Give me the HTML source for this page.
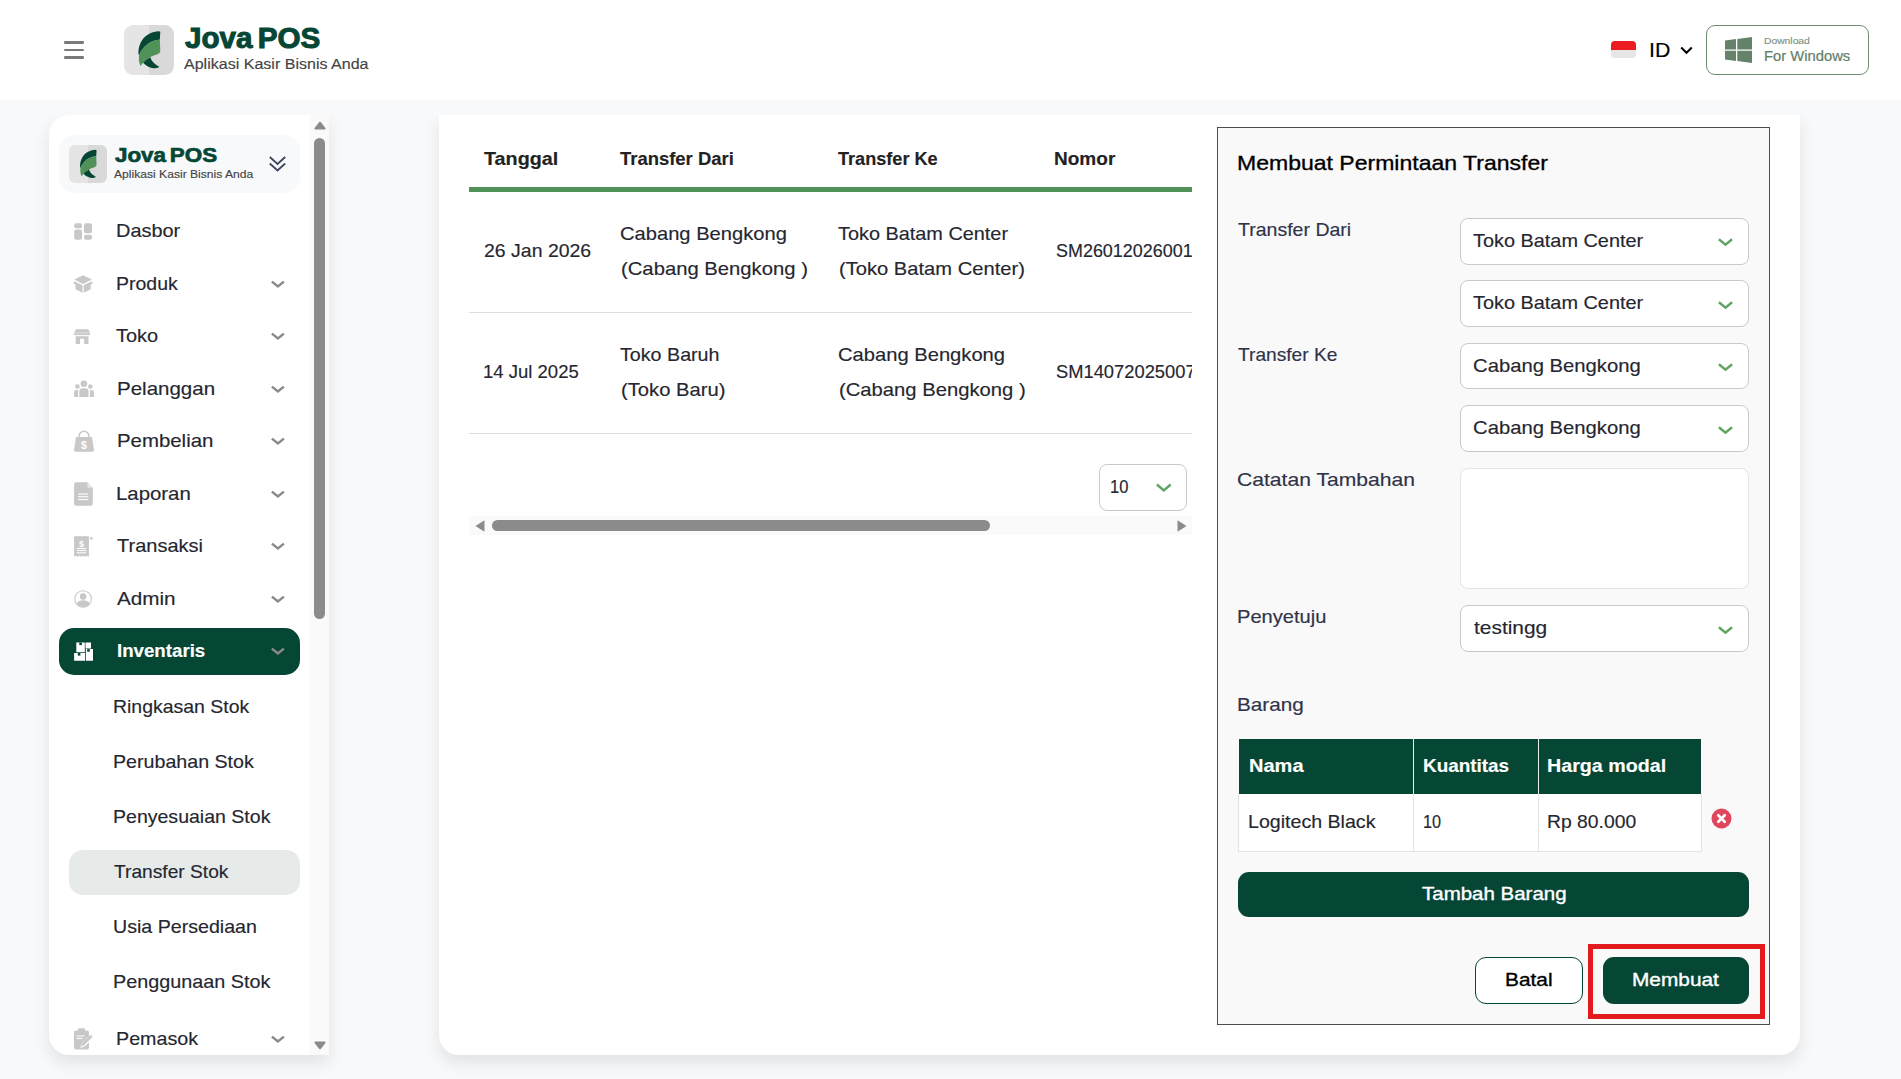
<!DOCTYPE html>
<html lang="id">
<head>
<meta charset="utf-8">
<title>Jova POS - Transfer Stok</title>
<style>
*{box-sizing:border-box;margin:0;padding:0}
html,body{width:1901px;height:1079px;overflow:hidden}
body{position:relative;background:#f8f9fb;font-family:"Liberation Sans",sans-serif;color:#25262f;font-size:18px}
.a{position:absolute}
.t{position:absolute;white-space:nowrap;line-height:1;transform-origin:0 0;-webkit-text-stroke-width:.15px}
svg{position:absolute;overflow:visible}
#hdr{left:0;top:0;width:1901px;height:100px;background:#fff}
.hb{left:64px;width:20px;height:2.4px;background:#7a7a7a;border-radius:1.2px}
.logo{border-radius:9px;overflow:hidden;background:linear-gradient(90deg,#e5e5e5 0,#e5e5e5 50%,#d9d9d9 50%,#d9d9d9 100%)}
#sb{left:49px;top:115px;width:280px;height:940px;background:#fff;border-radius:20px 0 0 20px;box-shadow:0 8px 16px rgba(40,42,50,.11);clip-path:inset(0 -40px -40px -40px)}
#sbtrack{left:310px;top:115px;width:19px;height:940px;background:#fafafa}
#sbthumb{left:314px;top:138px;width:11px;height:481px;background:#8b8b8b;border-radius:6px}
#card{left:439px;top:115px;width:1361px;height:940px;background:#fff;border-radius:0 0 20px 20px;box-shadow:0 8px 16px rgba(40,42,50,.11);clip-path:inset(0 -40px -40px -40px)}
.sel{background:#fff;border:1px solid #c9c9c9;border-radius:8px}
.g{background:#064635}
.ln{height:1px;background:#dcdee6}
</style>
</head>
<body>
<!-- header -->
<div id="hdr" class="a"></div>
<div class="a hb" style="top:41.4px"></div><div class="a hb" style="top:48.8px"></div><div class="a hb" style="top:56.2px"></div>
<div class="a logo" style="left:124px;top:25px;width:50px;height:50px"></div>
<svg style="left:124px;top:25px" width="50" height="50" viewBox="0 0 50 50"><path d="M14.600 29.800C13.600 17.500 21.500 6.800 34.900 6.300L36.300 6.800 35.800 14.700C27 15 19 21 15.200 30z" fill="#064635"/><path d="M35.800 14.700L36.300 25.500Q36.200 28.200 33.500 29.300C27 31 21 35 16.600 41 15 38 14.300 34 15.200 29.800 19 21 27 15 35.800 14.700z" fill="#519259"/><path d="M26.300 32.300C27.500 36.500 31 39.500 35.500 42 33 43.500 30.500 43.600 28 43 24.500 42.200 21.500 40.500 19.100 37.800 21 35.600 23.500 33.800 26.300 32.300z" fill="#064635"/></svg>
<!-- flag -->
<div class="a" style="left:1611px;top:41px;width:25px;height:17px;border-radius:4px;overflow:hidden;background:#e6e6e6"><div style="height:8.500px;background:#ed1c24"></div></div>
<svg style="left:1680px;top:46px" width="13" height="9" viewBox="0 0 13 9"><path d="M1.200 1.500l5.300 5.300 5.300-5.300" fill="none" stroke="#000" stroke-width="2"/></svg>
<div class="a" style="left:1706px;top:25px;width:163px;height:50px;border:1px solid #6e8c70;border-radius:9px;background:#fff"></div>
<svg style="left:1725px;top:37px" width="27" height="26" viewBox="0 0 27 26"><path d="M0 3.600l11-1.500v10.300H0zM12.300 1.900L27 0v12.400H12.300zM0 13.700h11V24L0 22.500zM12.300 13.700H27V26l-14.700-2z" fill="#65826a"/></svg>
<!-- sidebar -->
<div id="sb" class="a"></div><div id="sbtrack" class="a"></div><div id="sbthumb" class="a"></div>
<svg style="left:313.500px;top:121px" width="12" height="9" viewBox="0 0 12 9"><path d="M6 1.700L10.600 7.500H1.400z" fill="#8b8b8b" stroke="#8b8b8b" stroke-width="2" stroke-linejoin="round"/></svg>
<svg style="left:313.500px;top:1040.500px" width="12" height="9" viewBox="0 0 12 9"><path d="M6 7.300L10.600 1.500H1.400z" fill="#8b8b8b" stroke="#8b8b8b" stroke-width="2" stroke-linejoin="round"/></svg>
<div class="a" style="left:59px;top:135px;width:241px;height:58px;border-radius:16px;background:#f8f9fb"></div>
<div class="a logo" style="left:69px;top:145px;width:38px;height:38px;border-radius:6px"></div>
<svg style="left:69px;top:145px" width="38" height="38" viewBox="0 0 50 50"><path d="M14.600 29.800C13.600 17.500 21.500 6.800 34.900 6.300L36.300 6.800 35.800 14.700C27 15 19 21 15.200 30z" fill="#064635"/><path d="M35.800 14.700L36.300 25.500Q36.200 28.200 33.500 29.300C27 31 21 35 16.600 41 15 38 14.300 34 15.200 29.800 19 21 27 15 35.800 14.700z" fill="#519259"/><path d="M26.300 32.300C27.500 36.500 31 39.500 35.500 42 33 43.500 30.500 43.600 28 43 24.500 42.200 21.500 40.500 19.100 37.800 21 35.600 23.500 33.800 26.300 32.300z" fill="#064635"/></svg>
<svg style="left:269px;top:155.500px" width="17" height="16" viewBox="0 0 17 16"><path d="M0.800 1l7.700 7 7.700-7M0.800 7.500l7.700 7 7.700-7" fill="none" stroke="#3d4560" stroke-width="1.800"/></svg>
<div class="a g" style="left:59px;top:628px;width:241px;height:47px;border-radius:15px"></div>
<div class="a" style="left:69px;top:850px;width:231px;height:45px;border-radius:14px;background:#e6ebe9"></div>
<svg style="left:0;top:0" width="340" height="1079" viewBox="0 0 340 1079">
<g fill="#c8c8c8">
<!-- dasbor -->
<rect x="74.200" y="223.200" width="7.800" height="5" rx="2"/><rect x="74.200" y="229.500" width="7.800" height="10.300" rx="2"/>
<rect x="84" y="223.200" width="8" height="10" rx="2"/><rect x="84" y="234.700" width="8" height="5.100" rx="2"/>
<!-- produk cube -->
<path d="M83.100 275.300l8.800 4.300-8.800 4.400-8.800-4.400z"/>
<path d="M74.300 281.200l8.200 4.100v7.400l-7-3.500v-4.600l-1.900-.900zM91.900 281.200l-8.200 4.100v7.400l7-3.500v-4.600l1.900-.900z"/>
<!-- toko -->
<path d="M76 329.300h12.200l1.900 3.400H74.100z"/><rect x="74.100" y="333.200" width="16" height="1.900"/><path d="M75.700 336.200h12.800v7.900h-4.300v-5.400h-4.200v5.400h-4.300z"/>
<!-- pelanggan -->
<circle cx="83.900" cy="383.700" r="3.300"/><circle cx="77.400" cy="386.500" r="2.300"/><circle cx="90.300" cy="386.500" r="2.300"/>
<path d="M79.300 397v-5.800a3 3 0 0 1 3-3h3.200a3 3 0 0 1 3 3v5.800z"/><path d="M74.100 397v-4.600a2.300 2.300 0 0 1 2.300-2.300h1.700v6.900zM93.900 397v-4.600a2.300 2.300 0 0 0-2.300-2.300h-1.700v6.900z"/>
<!-- pembelian bag -->
<path d="M75.900 436.900h16.200l1.800 13.200a1.500 1.500 0 0 1-1.500 1.700H75.600a1.500 1.500 0 0 1-1.500-1.700z"/>
<path d="M79 437.500v-1.300a5 5 0 0 1 10 0v1.300" fill="none" stroke="#c8c8c8" stroke-width="1.500"/>
<!-- laporan doc -->
<path d="M76.100 482.300h11.300l5.400 5.400v16a2 2 0 0 1-2 2H76.100a2 2 0 0 1-2-2v-19.400a2 2 0 0 1 2-2z"/>
<!-- transaksi receipt -->
<path d="M74.100 536.300h14.800v20.500l-1.850-1.100-1.850 1.100-1.850-1.100-1.850 1.100-1.850-1.100-1.850 1.100-1.850-1.100-1.850 1.100z"/><circle cx="91.300" cy="538.400" r="1.300"/>
<!-- admin -->
<circle cx="83.100" cy="599" r="8.300" fill="none" stroke="#c8c8c8" stroke-width="1.100"/><circle cx="83.100" cy="596.600" r="3.300"/><path d="M76.300 603.300a8 8 0 0 0 13.600 0c-1.500-2-4-3.100-6.800-3.100s-5.300 1.100-6.800 3.100z"/>
<!-- pemasok clipboard -->
<path d="M76 1030.500h11a2 2 0 0 1 2 2v3.500l-7.500 7.500-1.200 4.300 4.300-1.200 4.400-4.400v5.400a2 2 0 0 1-2 2H76a2 2 0 0 1-2-2v-15.100a2 2 0 0 1 2-2z"/><rect x="78" y="1028.300" width="7" height="3.400" rx="1.200"/>
<path d="M90.600 1034.700l2 2-8.800 8.800-2.800.8.800-2.800z"/>
</g>
<g fill="#fff">
<!-- bag dollar / doc lines / receipt lines -->
<rect x="78" y="493.500" width="10.300" height="1.100"/><rect x="78" y="496.200" width="10.300" height="1.100"/><rect x="78" y="499" width="10.300" height="1.100"/>
<path d="M87.400 482.300v4.400a1 1 0 0 0 1 1h4.400z" opacity=".55"/>
<rect x="76.700" y="548" width="9.600" height="1"/><rect x="76.700" y="550.100" width="9.600" height="1"/><rect x="76.700" y="552.300" width="9.600" height="1"/>
<rect x="76.500" y="1035.500" width="8" height="1"/><rect x="76.500" y="1038" width="6" height="1"/>
<!-- inventaris boxes -->
<path d="M76.300 642.500h8.500v9.800h-8.500zM85.500 642.500h5.500v6h-5.500zM74.100 653h10.900v7.700H74.100zM85.800 649.100h7.200v11.600h-7.200z"/>
</g>
<g fill="#064635"><rect x="79.300" y="642.500" width="2.600" height="2.600"/><rect x="87.200" y="649.100" width="2.600" height="2.600"/><rect x="77.800" y="653" width="2.600" height="2.600"/></g>
<g font-family="Liberation Sans,sans-serif" font-weight="700" fill="#fff" text-anchor="middle"><text x="84" y="449.300" font-size="10.500">$</text><text x="81.500" y="546.600" font-size="9">$</text></g>
<!-- chevrons -->
<g fill="none" stroke="#8a8a8a" stroke-width="2.500">
<path d="M271.900 281.6l6 4.900 6-4.900"/>
<path d="M271.900 333.6l6 4.900 6-4.900"/>
<path d="M271.900 386.6l6 4.900 6-4.900"/>
<path d="M271.900 438.6l6 4.900 6-4.900"/>
<path d="M271.900 491.6l6 4.900 6-4.900"/>
<path d="M271.900 543.6l6 4.900 6-4.900"/>
<path d="M271.900 596.6l6 4.900 6-4.900"/>
<path d="M271.900 648.6l6 4.900 6-4.900"/>
<path d="M271.900 1036.6l6 4.900 6-4.900"/>

</g>
</svg>

<!-- main card -->
<div id="card" class="a"></div>
<div class="a" style="left:469px;top:187px;width:723px;height:5px;background:#519259"></div>
<div class="a ln" style="left:469px;top:312px;width:723px"></div>
<div class="a ln" style="left:469px;top:433px;width:723px"></div>
<div class="a sel" style="left:1098.600px;top:464.300px;width:88.400px;height:46.300px"></div>
<svg style="left:1156px;top:483px" width="16" height="10" viewBox="0 0 16 10"><path d="M0.900 1.500l6.900 5.900 6.900-5.900" fill="none" stroke="#5fa463" stroke-width="2.400"/></svg>
<div class="a" style="left:469px;top:516px;width:723px;height:18.600px;background:#fafafa"></div>
<div class="a" style="left:492px;top:520px;width:498px;height:11px;border-radius:6px;background:#8b8b8b"></div>
<svg style="left:474.500px;top:519.500px" width="10" height="12" viewBox="0 0 10 12"><path d="M0.500 6L9.500 0.200v11.600z" fill="#8b8b8b"/></svg>
<svg style="left:1177px;top:519.500px" width="10" height="12" viewBox="0 0 10 12"><path d="M9.500 6L0.500 0.200v11.600z" fill="#8b8b8b"/></svg>
<!-- panel -->
<div class="a" style="left:1217px;top:127px;width:553px;height:898px;background:#f9f9f9;border:1px solid #4d4d4d"></div>
<div class="a sel" style="left:1460px;top:218px;width:289px;height:46.700px"></div>
<div class="a sel" style="left:1460px;top:280.400px;width:289px;height:46.700px"></div>
<div class="a sel" style="left:1460px;top:342.800px;width:289px;height:46.700px"></div>
<div class="a sel" style="left:1460px;top:405.200px;width:289px;height:46.700px"></div>
<div class="a sel" style="left:1460px;top:467.800px;width:289px;height:121.500px;border-color:#e4e4e4"></div>
<div class="a sel" style="left:1460px;top:605.200px;width:289px;height:46.800px"></div>
<svg style="left:1718px;top:238.0px" width="16" height="10" viewBox="0 0 16 10"><path d="M0.900 1.200l6.600 5.400 6.600-5.400" fill="none" stroke="#5fa463" stroke-width="2.400"/></svg>
<svg style="left:1718px;top:300.5px" width="16" height="10" viewBox="0 0 16 10"><path d="M0.900 1.200l6.600 5.400 6.600-5.400" fill="none" stroke="#5fa463" stroke-width="2.400"/></svg>
<svg style="left:1718px;top:363.0px" width="16" height="10" viewBox="0 0 16 10"><path d="M0.900 1.200l6.600 5.400 6.600-5.400" fill="none" stroke="#5fa463" stroke-width="2.400"/></svg>
<svg style="left:1718px;top:425.5px" width="16" height="10" viewBox="0 0 16 10"><path d="M0.900 1.200l6.600 5.400 6.600-5.400" fill="none" stroke="#5fa463" stroke-width="2.400"/></svg>
<svg style="left:1718px;top:625.5px" width="16" height="10" viewBox="0 0 16 10"><path d="M0.900 1.200l6.600 5.400 6.600-5.400" fill="none" stroke="#5fa463" stroke-width="2.400"/></svg>

<div class="a g" style="left:1238.500px;top:739px;width:462.500px;height:55px"></div>
<div class="a" style="left:1238px;top:794px;width:463.500px;height:58px;background:#fff;border:1px solid #e3e3e3;border-top:0"></div>
<div class="a" style="left:1413px;top:739px;width:1px;height:55px;background:#e8efe9"></div>
<div class="a" style="left:1538px;top:739px;width:1px;height:55px;background:#e8efe9"></div>
<div class="a" style="left:1413px;top:794px;width:1px;height:57px;background:#e3e3e3"></div>
<div class="a" style="left:1538px;top:794px;width:1px;height:57px;background:#e3e3e3"></div>
<svg style="left:1711px;top:808.400px" width="21" height="21" viewBox="0 0 21 21"><circle cx="10.500" cy="10.500" r="10" fill="#e0465c"/><path d="M7.300 7.300l6.400 6.400M13.700 7.300l-6.400 6.400" stroke="#fff" stroke-width="2.700" stroke-linecap="round"/></svg>
<div class="a g" style="left:1238px;top:872px;width:511px;height:45px;border-radius:11px"></div>
<div class="a" style="left:1475px;top:957px;width:108px;height:47px;border-radius:11px;background:#fff;border:1px solid #064635"></div>
<div class="a g" style="left:1603px;top:957px;width:146px;height:47px;border-radius:11px"></div>
<div class="a" style="left:1587.500px;top:943.500px;width:177.500px;height:75px;border:5px solid #e31b1e"></div>
<div class="t" style="left:184.8px;top:24px;font-size:28.6px;font-weight:700;color:#064635;transform:scaleX(1.036);-webkit-text-stroke:1px #064635;word-spacing:-3px">Jova POS</div>
<div class="t" style="left:184.0px;top:56px;font-size:15.2px;color:#444;transform:scaleX(1.056);">Aplikasi Kasir Bisnis Anda</div>
<div class="t" style="left:1649.4px;top:40px;font-size:20.4px;color:#000;transform:scaleX(1.046);">ID</div>
<div class="t" style="left:1764.2px;top:36px;font-size:9.6px;color:#7d937f;transform:scaleX(1.074);">Download</div>
<div class="t" style="left:1764.0px;top:49px;font-size:14.2px;color:#65806a;transform:scaleX(1.042);-webkit-text-stroke:.2px #65806a">For Windows</div>
<div class="t" style="left:114.6px;top:145px;font-size:20.8px;font-weight:700;color:#064635;transform:scaleX(1.076);-webkit-text-stroke:.7px #064635;word-spacing:-2.2px">Jova POS</div>
<div class="t" style="left:114.2px;top:169px;font-size:11.4px;color:#444;transform:scaleX(1.063);">Aplikasi Kasir Bisnis Anda</div>
<div class="t" style="left:115.8px;top:223px;font-size:17.7px;color:#25262f;transform:scaleX(1.126);">Dasbor</div>
<div class="t" style="left:115.8px;top:276px;font-size:17.7px;color:#25262f;transform:scaleX(1.101);">Produk</div>
<div class="t" style="left:116.4px;top:328px;font-size:17.7px;color:#25262f;transform:scaleX(1.128);">Toko</div>
<div class="t" style="left:116.6px;top:381px;font-size:17.7px;color:#25262f;transform:scaleX(1.159);">Pelanggan</div>
<div class="t" style="left:116.6px;top:433px;font-size:17.7px;color:#25262f;transform:scaleX(1.153);">Pembelian</div>
<div class="t" style="left:115.8px;top:486px;font-size:17.7px;color:#25262f;transform:scaleX(1.152);">Laporan</div>
<div class="t" style="left:117.4px;top:538px;font-size:17.7px;color:#25262f;transform:scaleX(1.131);">Transaksi</div>
<div class="t" style="left:117.2px;top:591px;font-size:17.7px;color:#25262f;transform:scaleX(1.169);">Admin</div>
<div class="t" style="left:117.0px;top:643px;font-size:17.7px;font-weight:700;color:#fff;transform:scaleX(1.056);">Inventaris</div>
<div class="t" style="left:112.8px;top:699px;font-size:17.7px;color:#25262f;transform:scaleX(1.100);">Ringkasan Stok</div>
<div class="t" style="left:112.8px;top:754px;font-size:17.7px;color:#25262f;transform:scaleX(1.110);">Perubahan Stok</div>
<div class="t" style="left:112.8px;top:809px;font-size:17.7px;color:#25262f;transform:scaleX(1.104);">Penyesuaian Stok</div>
<div class="t" style="left:114.0px;top:864px;font-size:17.7px;color:#25262f;transform:scaleX(1.085);">Transfer Stok</div>
<div class="t" style="left:113.1px;top:919px;font-size:17.7px;color:#25262f;transform:scaleX(1.109);">Usia Persediaan</div>
<div class="t" style="left:112.8px;top:974px;font-size:17.7px;color:#25262f;transform:scaleX(1.119);">Penggunaan Stok</div>
<div class="t" style="left:116.1px;top:1031px;font-size:17.7px;color:#25262f;transform:scaleX(1.113);">Pemasok</div>
<div class="t" style="left:483.9px;top:151px;font-size:17.7px;font-weight:700;color:#222;transform:scaleX(1.117);">Tanggal</div>
<div class="t" style="left:620.2px;top:151px;font-size:17.7px;font-weight:700;color:#222;transform:scaleX(1.043);">Transfer Dari</div>
<div class="t" style="left:838.1px;top:151px;font-size:17.7px;font-weight:700;color:#222;transform:scaleX(1.024);">Transfer Ke</div>
<div class="t" style="left:1054.4px;top:151px;font-size:17.7px;font-weight:700;color:#222;transform:scaleX(1.076);">Nomor</div>
<div class="t" style="left:483.5px;top:243px;font-size:17.7px;color:#25262f;transform:scaleX(1.101);">26 Jan 2026</div>
<div class="t" style="left:619.9px;top:226px;font-size:17.7px;color:#25262f;transform:scaleX(1.139);">Cabang Bengkong</div>
<div class="t" style="left:620.9px;top:261px;font-size:17.7px;color:#25262f;transform:scaleX(1.145);">(Cabang Bengkong )</div>
<div class="t" style="left:838.4px;top:226px;font-size:17.7px;color:#25262f;transform:scaleX(1.123);">Toko Batam Center</div>
<div class="t" style="left:839.1px;top:261px;font-size:17.7px;color:#25262f;transform:scaleX(1.139);">(Toko Batam Center)</div>
<div class="t" style="left:483.3px;top:364px;font-size:17.7px;color:#25262f;transform:scaleX(1.047);">14 Jul 2025</div>
<div class="t" style="left:620.4px;top:347px;font-size:17.7px;color:#25262f;transform:scaleX(1.112);">Toko Baruh</div>
<div class="t" style="left:621.1px;top:382px;font-size:17.7px;color:#25262f;transform:scaleX(1.142);">(Toko Baru)</div>
<div class="t" style="left:837.9px;top:347px;font-size:17.7px;color:#25262f;transform:scaleX(1.140);">Cabang Bengkong</div>
<div class="t" style="left:839.1px;top:382px;font-size:17.7px;color:#25262f;transform:scaleX(1.144);">(Cabang Bengkong )</div>
<div class="t" style="left:1110.0px;top:479px;font-size:17.7px;color:#25262f;transform:scaleX(0.935);">10</div>
<div class="t" style="left:1237.0px;top:153px;font-size:20.4px;color:#000;transform:scaleX(1.129);-webkit-text-stroke:.32px #000">Membuat Permintaan Transfer</div>
<div class="t" style="left:1238.1px;top:222px;font-size:17.7px;color:#2f3349;transform:scaleX(1.104);">Transfer Dari</div>
<div class="t" style="left:1238.2px;top:347px;font-size:17.7px;color:#2f3349;transform:scaleX(1.084);">Transfer Ke</div>
<div class="t" style="left:1237.1px;top:472px;font-size:17.7px;color:#2f3349;transform:scaleX(1.194);">Catatan Tambahan</div>
<div class="t" style="left:1236.6px;top:609px;font-size:17.7px;color:#2f3349;transform:scaleX(1.136);">Penyetuju</div>
<div class="t" style="left:1236.5px;top:697px;font-size:17.7px;color:#2f3349;transform:scaleX(1.172);">Barang</div>
<div class="t" style="left:1473.4px;top:233px;font-size:17.7px;color:#25262f;transform:scaleX(1.124);">Toko Batam Center</div>
<div class="t" style="left:1473.4px;top:295px;font-size:17.7px;color:#25262f;transform:scaleX(1.124);">Toko Batam Center</div>
<div class="t" style="left:1472.9px;top:358px;font-size:17.7px;color:#25262f;transform:scaleX(1.145);">Cabang Bengkong</div>
<div class="t" style="left:1472.9px;top:420px;font-size:17.7px;color:#25262f;transform:scaleX(1.145);">Cabang Bengkong</div>
<div class="t" style="left:1473.7px;top:620px;font-size:17.7px;color:#25262f;transform:scaleX(1.182);">testingg</div>
<div class="t" style="left:1248.5px;top:758px;font-size:17.7px;font-weight:700;color:#fff;transform:scaleX(1.132);">Nama</div>
<div class="t" style="left:1422.7px;top:758px;font-size:17.7px;font-weight:700;color:#fff;transform:scaleX(1.068);">Kuantitas</div>
<div class="t" style="left:1547.0px;top:758px;font-size:17.7px;font-weight:700;color:#fff;transform:scaleX(1.112);">Harga modal</div>
<div class="t" style="left:1248.2px;top:814px;font-size:17.7px;color:#25262f;transform:scaleX(1.108);">Logitech Black</div>
<div class="t" style="left:1422.9px;top:814px;font-size:17.7px;color:#25262f;transform:scaleX(0.918);">10</div>
<div class="t" style="left:1546.8px;top:814px;font-size:17.7px;color:#25262f;transform:scaleX(1.093);">Rp 80.000</div>
<div class="t" style="left:1421.7px;top:886px;font-size:17.7px;color:#fff;transform:scaleX(1.158);-webkit-text-stroke:.35px #fff">Tambah Barang</div>
<div class="t" style="left:1505.1px;top:972px;font-size:17.7px;color:#000;transform:scaleX(1.179);-webkit-text-stroke:.32px #000">Batal</div>
<div class="t" style="left:1632.1px;top:972px;font-size:17.7px;color:#fff;transform:scaleX(1.178);-webkit-text-stroke:.35px #fff">Membuat</div>
<div class="a" style="left:1055.9px;top:243px;width:136.1px;height:21px;overflow:hidden"><div class="t" style="left:0;top:0;font-size:17.7px;color:#25262f;transform:scaleX(1.014)">SM26012026001</div></div>
<div class="a" style="left:1055.9px;top:364px;width:136.1px;height:21px;overflow:hidden"><div class="t" style="left:0;top:0;font-size:17.7px;color:#25262f;transform:scaleX(1.036)">SM14072025007</div></div>
</body>
</html>
